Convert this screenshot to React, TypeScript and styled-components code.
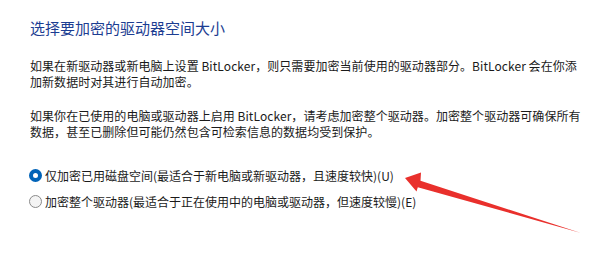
import styled, { createGlobalStyle } from "styled-components";

const GlobalStyle = createGlobalStyle`
    html, body {
        margin: 0;
        padding: 0;
        background: #ffffff;
    }
    body {
        font-family: "Noto Sans CJK SC", "Noto Sans", sans-serif;
        color: #1a1a1a;
    }
`;

type optionType = {
    label: string;
    checked: boolean;
};

const options: optionType[] = [
    { label: "仅加密已用磁盘空间(最适合于新电脑或新驱动器，且速度较快)(U)", checked: true },
    { label: "加密整个驱动器(最适合于正在使用中的电脑或驱动器，但速度较慢)(E)", checked: false },
];

function Arrow() {
    // tip, barbs and a tapering shaft toward the tail
    return (
        <ArrowLayer width="599" height="275" viewBox="0 0 599 275">
            <polygon
                points="405,178 421,172.5 420.5,180.8 581,233 417.8,187.2 416.5,191.5"
                fill="#e9302c"
            />
        </ArrowLayer>
    );
}

function App() {
    return (
        <Page>
            <GlobalStyle />
            <Title>选择要加密的驱动器空间大小</Title>
            <Paragraph>
                如果在新驱动器或新电脑上设置 BitLocker，则只需要加密当前使用的驱动器部分。BitLocker 会在你添
                <br />
                加新数据时对其进行自动加密。
            </Paragraph>
            <Paragraph>
                如果你在已使用的电脑或驱动器上启用 BitLocker，请考虑加密整个驱动器。加密整个驱动器可确保所有
                <br />
                数据，甚至已删除但可能仍然包含可检索信息的数据均受到保护。
            </Paragraph>
            <Options>
                {options.map((o) => (
                    <Option key={o.label}>
                        <Radio $checked={o.checked} />
                        <span>{o.label}</span>
                    </Option>
                ))}
            </Options>
            <Arrow />
        </Page>
    );
}

const Page = styled.div`
    position: relative;
    width: 599px;
    height: 275px;
    box-sizing: border-box;
    padding: 17.5px 0 0 30px;
    overflow: hidden;
`;

const Title = styled.h1`
    margin: 0;
    font-size: 15px;
    line-height: 20px;
    font-weight: 400;
    color: #1c3d92;
    white-space: nowrap;
`;

const Paragraph = styled.p`
    margin: 20.5px 0 0;
    font-size: 12px;
    line-height: 16px;
    letter-spacing: 0.05px;
    white-space: nowrap;

    & + & {
        margin-top: 18px;
    }
`;

const Options = styled.div`
    display: flex;
    flex-direction: column;
    gap: 5.5px;
    margin-top: 25.5px;
    margin-left: -1px;
`;

const Option = styled.label`
    display: flex;
    align-items: center;
    gap: 3px;
    height: 20px;
    font-size: 12px;
    white-space: nowrap;
`;

const Radio = styled.span<{ $checked: boolean }>`
    box-sizing: border-box;
    width: 13px;
    height: 13px;
    border-radius: 50%;
    flex-shrink: 0;
    ${(p) =>
        p.$checked
            ? `
        background: #ffffff;
        border: 4.5px solid #0063b8;
    `
            : `
        background: #f4f4f4;
        border: 1px solid #8a8a8a;
    `}
`;

const ArrowLayer = styled.svg`
    position: absolute;
    top: 0;
    left: 0;
    pointer-events: none;
`;

export default App;
